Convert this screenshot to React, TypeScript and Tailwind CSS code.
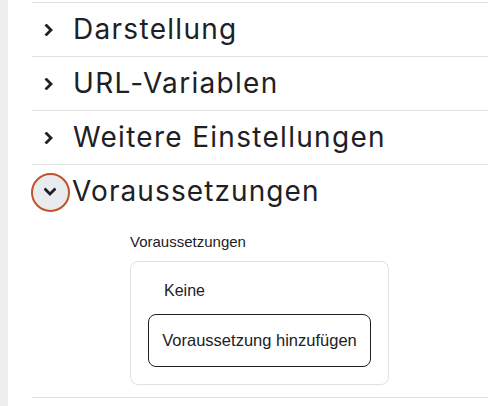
const sections = ["Darstellung", "URL-Variablen", "Weitere Einstellungen"];

function Chevron({ down = false }: { down?: boolean }) {
  return (
    <svg width="12" height="12" viewBox="0 0 12 12" className={down ? "rotate-90" : ""}>
      <polyline
        points="3.5,1.5 8,6 3.5,10.5"
        fill="none"
        stroke="#1d2125"
        strokeWidth="2.8"
        strokeLinecap="square"
        strokeLinejoin="miter"
      />
    </svg>
  );
}

export default function App() {
  return (
    <div className="flex w-[488px] h-[406px] bg-white overflow-hidden text-[#1d2125]">
      <div className="w-[8px] shrink-0 bg-[#eeeeee]" />
      <div className="flex-1 pl-[24px] pt-[2px]">
        {sections.map((s) => (
          <div key={s} className="h-[54px] border-t border-[#dee2e6] flex items-center">
            <div className="w-[33px] flex justify-center">
              <Chevron />
            </div>
            <span className="text-[28px] leading-none font-normal font-['Inter',sans-serif] tracking-[1.3px] -mt-[2px] ml-[8px]">
              {s}
            </span>
          </div>
        ))}
        <div className="border-t border-b border-[#dee2e6] pb-[12px]">
          <div className="h-[54px] flex items-center">
            <div className="w-[40px] flex justify-center -ml-[2px]">
              <div className="w-[39px] h-[39px] rounded-full border-2 border-[#c2522b] bg-[#e9ecef] flex items-center justify-center">
                <Chevron down />
              </div>
            </div>
            <span className="text-[28px] leading-none font-normal font-['Inter',sans-serif] tracking-[1.1px] -mt-[2px] ml-[2px]">
              Voraussetzungen
            </span>
          </div>
          <div className="pl-[98px] font-['Liberation_Sans',sans-serif]">
            <div className="text-[15px] pt-[12px] h-[42px]">Voraussetzungen</div>
            <div className="w-[259px] border border-[#dee2e6] rounded-[8px] pt-[17px] pb-[17px] pl-[17px]">
              <div className="text-[16px] pl-[16px] mb-[11px]">Keine</div>
              <button className="w-[223px] h-[53px] border border-[#1d2125] rounded-[8px] text-[16.5px] text-center">
                Voraussetzung hinzufügen
              </button>
            </div>
          </div>
        </div>
      </div>
    </div>
  );
}
